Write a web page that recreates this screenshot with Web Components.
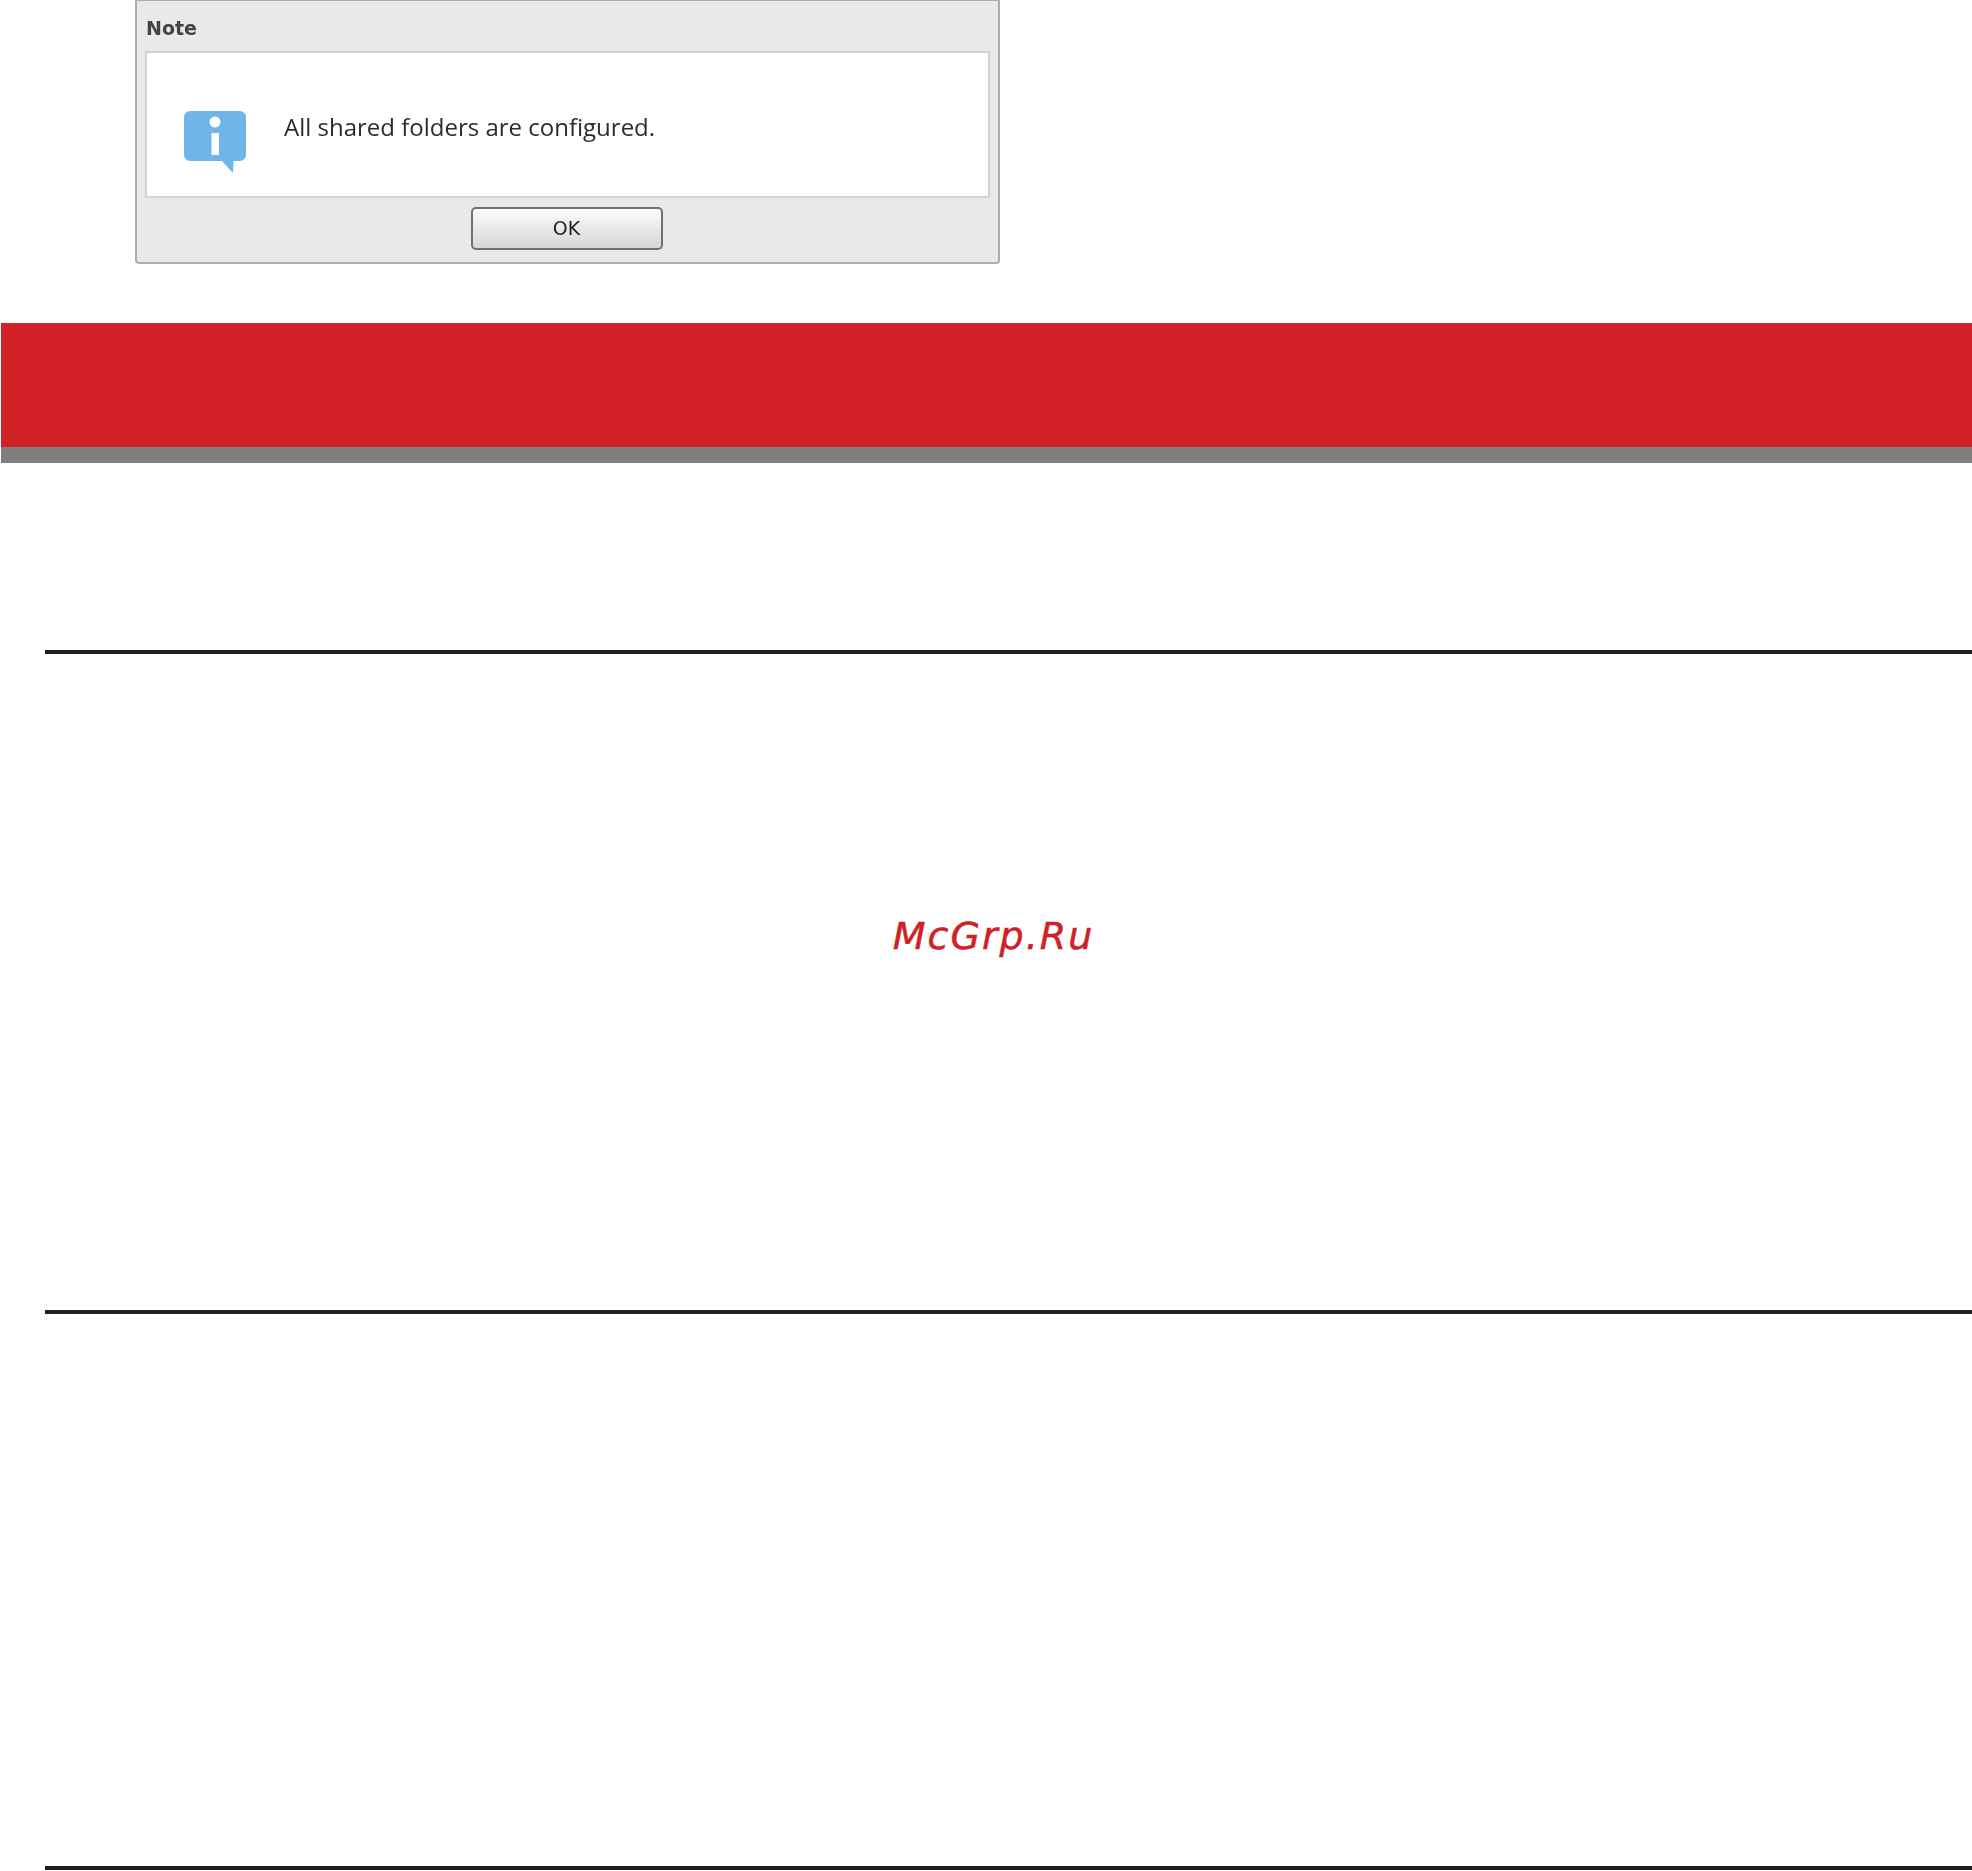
<!DOCTYPE html>
<html lang="en"><head><meta charset="utf-8"><title>Note</title>
<style>html,body{margin:0;padding:0;background:#fff;overflow:hidden}</style></head>
<body>
<manual-page>
  <note-dialog slot="top" heading="Note" message="All shared folders are configured." action="OK"></note-dialog>
  <section-banner slot="top"></section-banner>
  <rule-line slot="rules" style="--gap:187px"></rule-line>
  <water-mark slot="rules" style="--h:656px">McGrp.Ru</water-mark>
  <rule-line slot="rules"></rule-line>
  <rule-line slot="rules" style="--gap:552px"></rule-line>
</manual-page>
<script>
function el(name, css, html, init){
  customElements.define(name, class extends HTMLElement{
    constructor(){super();this.attachShadow({mode:'open'}).innerHTML='<style>'+css+'</style>'+html;}
    connectedCallback(){if(init)init(this,this.shadowRoot);}
  });
}
el('manual-page',
 ':host{display:flex;flex-direction:column;width:1972px;height:1871px;overflow:hidden;background:#fff}',
 '<slot name="top"></slot><slot name="rules"></slot>');
el('note-dialog',
 `:host{display:flex;flex-direction:column;box-sizing:border-box;width:865px;height:264px;margin-left:135px;background:#e9e9e9;
   border:solid #adadad;border-width:1px 2px 2px 2px;border-radius:0 0 4px 4px;color:#333;font-family:"DejaVu Sans",sans-serif;filter:blur(.4px)}
  .title{height:50px;box-sizing:border-box;padding:14px 0 0 9px;font-size:19px;font-weight:700;line-height:26px;color:#444}
  .body{display:flex;align-items:center;box-sizing:border-box;height:147px;margin:0 8px 0 8px;background:#fff;border:2px solid #d6d1d1;padding:0 0 0 37px;gap:38px}
  svg{display:block;flex:none;margin-top:34px}
  .msg{font:24px/30px "Open Sans",sans-serif;margin-top:4px;color:#2c2c2c}
  .foot{flex:1;display:flex;justify-content:center;padding-top:9px;align-items:flex-start}
  button{width:192px;height:43px;box-sizing:border-box;border:2px solid #707070;border-radius:5px;background:linear-gradient(#fdfdfd,#d6d6d6);
   font:19px "DejaVu Sans",sans-serif;line-height:37px;color:#222;padding:0 0 1px;margin:0 0 0 -2px}`,
 `<div class="title"></div><div class="body">
   <svg width="62" height="62" viewBox="0 0 62 62" aria-hidden="true"><path fill="#6eb6ea" d="M6 0H56a6 6 0 0 1 6 6V44a6 6 0 0 1-6 6H49.500L49 62 38 50H6a6 6 0 0 1-6-6V6A6 6 0 0 1 6 0Z"/><circle cx="31" cy="11" r="5.500" fill="#fff"/><rect x="27.500" y="22" width="7.500" height="22" fill="#fff"/></svg>
   <div class="msg"></div></div><div class="foot"><button type="button"></button></div>`,
 (h,s)=>{s.querySelector('.title').textContent=h.getAttribute('heading');s.querySelector('.msg').textContent=h.getAttribute('message');s.querySelector('button').textContent=h.getAttribute('action');});
el('section-banner',
 ':host{display:block;box-sizing:border-box;height:140px;margin:59px 0 0 1px;background:#d12127;border-bottom:16px solid #7f7d7e}','');
el('rule-line',
 ':host{display:block;height:4px;margin:var(--gap,0) 0 0 45px;background:#231f20}','');
el('water-mark',
 `:host{display:flex;justify-content:center;align-items:flex-start;height:var(--h);box-sizing:border-box;padding:254px 0 0 15px;
   font:italic 38px/56px "DejaVu Sans",sans-serif;letter-spacing:2px;color:#d12127;-webkit-text-stroke:.5px #c81f25}`,
 '<slot></slot>');
</script>
</body></html>
